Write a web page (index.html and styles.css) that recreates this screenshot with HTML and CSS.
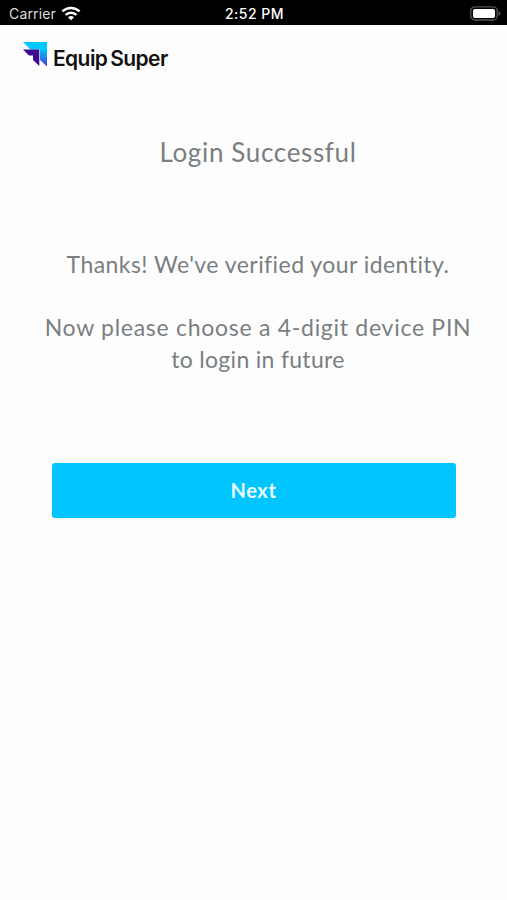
FILE: index.html
```html
<!DOCTYPE html>
<html lang="en">
<head>
<meta charset="utf-8">
<title>Login Successful</title>
<link rel="stylesheet" href="styles.css">
</head>
<body>
<div class="status-bar">
  <div class="carrier">
    <span>Carrier</span>
    <svg class="wifi" width="20" height="15" viewBox="0 0 20 15" fill="none" stroke="#fff" stroke-width="2.5">
      <path d="M1.4 5.4C6.3 .7 13.7 .7 18.6 5.4"/>
      <path d="M4.6 8.9C7.7 6 12.3 6 15.4 8.9"/>
      <path d="M7 11.3Q10 8.9 13 11.3L10 14.3Z" fill="#fff" stroke="none"/>
    </svg>
  </div>
  <time class="clock">2:52 PM</time>
  <svg class="battery" width="31" height="15" viewBox="0 0 31 15">
    <rect x=".8" y=".8" width="26.4" height="13.2" rx="4" fill="#000" stroke="#555" stroke-width="1.3"/>
    <rect x="3" y="3" width="22" height="9" rx="1.8" fill="#fff"/>
    <path d="M28.5 5V10Q30.5 9 30.5 7.5T28.5 5Z" fill="#555"/>
  </svg>
</div>
<header class="brand">
  <svg class="brand-mark" width="24" height="25" viewBox="0 0 24 25">
    <defs>
      <linearGradient id="mark" x1="0" y1="0" x2="0" y2="1">
        <stop offset=".3" stop-color="#00c8ff"/>
        <stop offset="1" stop-color="#4a35d8"/>
      </linearGradient>
    </defs>
    <path d="M0 0H24V24.5L17 18V7.5H7.5Z" fill="url(#mark)"/>
    <path d="M0 7.6H16.3V24L10 18V13.5H6Z" fill="#3d0b93"/>
  </svg>
  <span class="brand-name"><span>Equip</span><span>Super</span></span>
</header>
<main class="content">
  <h1 class="title">Login Successful</h1>
  <p class="message verified">Thanks! We've verified your identity.</p>
  <p class="message prompt">Now please choose a 4-digit device PIN</p>
  <p class="message future">to login in future</p>
  <button class="next" type="button"><span>Next</span></button>
</main>
</body>
</html>
```

FILE: styles.css
```css
* { box-sizing: border-box; }
body {
  margin: 0;
  min-height: 900px;
  background: #fdfdfd;
  font-family: Lato, sans-serif;
  overflow: hidden;
}
.status-bar {
  display: grid;
  grid-template-columns: 1fr auto 1fr;
  align-items: center;
  height: 25px;
  padding: 2px 6px 0 9px;
  background: #000;
  color: #fff;
  font-family: Inter, sans-serif;
  font-size: 14px;
  line-height: 20px;
}
.carrier {
  display: flex;
  align-items: center;
  gap: 5px;
  color: #ddd;
  letter-spacing: .15px;
}
.clock {
  margin-right: 1px;
  font-weight: 500;
  letter-spacing: .5px;
}
.battery { justify-self: end; }
.brand {
  display: flex;
  align-items: flex-start;
  height: 75px;
  padding: 17px 0 0 23px;
}
.brand-name {
  display: flex;
  gap: 3px;
  margin: 3px 0 0 6px;
  color: #111;
  font-family: Inter, sans-serif;
  font-size: 21px;
  font-weight: 600;
  line-height: 28px;
  letter-spacing: -.6px;
}
.content {
  display: flex;
  flex-direction: column;
  align-items: center;
  padding: 36px 0 0 9px;
  color: #797f81;
}
.title {
  margin: 0 0 80px;
  font-size: 26px;
  font-weight: 400;
  line-height: 32px;
  letter-spacing: .65px;
}
.message {
  margin: 0;
  font-size: 23px;
  line-height: 32px;
  white-space: nowrap;
}
.verified {
  margin-bottom: 31px;
  letter-spacing: .45px;
}
.prompt { letter-spacing: .72px; }
.future { letter-spacing: .3px; }
.next {
  width: 404px;
  height: 55px;
  margin: 88px 9px 0 0;
  padding: 0;
  border: 0;
  border-radius: 3px;
  background: #00c5ff;
  color: #e6faff;
  font: 700 20px/55px Lato, sans-serif;
  letter-spacing: .6px;
}
```
